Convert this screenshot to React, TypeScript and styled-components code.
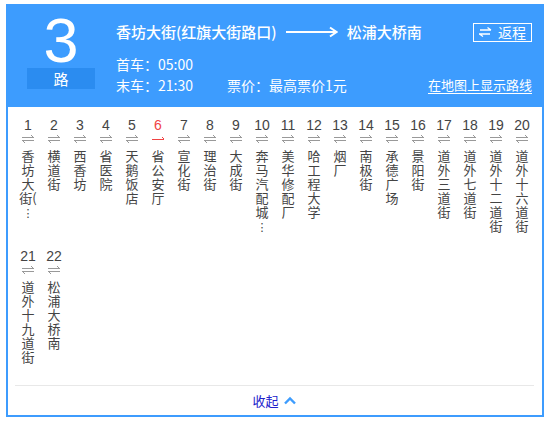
import React from "react";
import styled, { createGlobalStyle } from "styled-components";

const BLUE = "#3d9cfe";

const stops = [
  { name: "香坊大街(", more: true },
  { name: "横道街" },
  { name: "西香坊" },
  { name: "省医院" },
  { name: "天鹅饭店" },
  { name: "省公安厅", current: true },
  { name: "宣化街" },
  { name: "理治街" },
  { name: "大成街" },
  { name: "奔马汽配城", more: true },
  { name: "美华修配厂" },
  { name: "哈工程大学" },
  { name: "烟厂" },
  { name: "南极街" },
  { name: "承德广场" },
  { name: "景阳街" },
  { name: "道外三道街" },
  { name: "道外七道街" },
  { name: "道外十二道街" },
  { name: "道外十六道街" },
  { name: "道外十九道街" },
  { name: "松浦大桥南" },
];

function StopArrow({ current }: { current?: boolean }) {
  if (current) {
    return (
      <svg width="12" height="8" viewBox="0 0 12 8" shapeRendering="crispEdges">
        <path d="M0 4.5H12M11 3.5h1M10 2.5h1" stroke="#f04444" strokeWidth="1" fill="none" />
      </svg>
    );
  }
  return (
    <svg width="12" height="8" viewBox="0 0 12 8" shapeRendering="crispEdges">
      <path d="M0 2.5H12M10 1.5h1M9 0.5h1M0 5.5H12M1 6.5h1M2 7.5h1" stroke="#999" strokeWidth="1" fill="none" />
    </svg>
  );
}

export default function App() {
  return (
    <>
      <GlobalStyle />
      <Frame>
        <Header>
          <LineBadge>
            <LineNumber>3</LineNumber>
            <LineLabel>路</LineLabel>
          </LineBadge>
          <Info>
            <TitleRow>
              <Terminal>香坊大街(红旗大街路口)</Terminal>
              <svg width="52" height="12" viewBox="0 0 52 12">
                <path d="M0 6H50" stroke="#fff" strokeWidth="2" />
                <path d="M44 1.5L50.5 6L44 10.5" stroke="#fff" strokeWidth="2" fill="none" />
              </svg>
              <Terminal>松浦大桥南</Terminal>
              <ReturnButton>
                <svg width="13" height="10" viewBox="0 0 13 10">
                  <path d="M1 3H12M12 3L8.5 0.5M0 7H11M0.5 7L4 9.5" stroke="#fff" strokeWidth="1.3" fill="none" />
                </svg>
                返程
              </ReturnButton>
            </TitleRow>
            <MetaRow $top={14}>首车：05:00</MetaRow>
            <MetaRow $top={5}>
              <span>末车：21:30</span>
              <Fare>票价：最高票价1元</Fare>
              <MapLink>在地图上显示路线</MapLink>
            </MetaRow>
          </Info>
        </Header>
        <StopGrid>
          {stops.map((s, i) => (
            <Stop key={i}>
              <StopNo $current={s.current}>{i + 1}</StopNo>
              <StopArrow current={s.current} />
              <StopName>{s.name}</StopName>
              {s.more && <More>︙</More>}
            </Stop>
          ))}
        </StopGrid>
        <Footer>
          <Collapse>
            收起
            <svg width="14" height="9" viewBox="0 0 14 9">
              <path d="M2 7.5L7 2.5L12 7.5" stroke={BLUE} strokeWidth="2.4" fill="none" />
            </svg>
          </Collapse>
        </Footer>
      </Frame>
    </>
  );
}

const GlobalStyle = createGlobalStyle`
  body {
    margin: 0;
    background: #fff;
    font-family: "Liberation Sans", "Noto Sans CJK SC", sans-serif;
  }
  #root {
    padding: 4px 5px 0 6px;
  }
`;

const Frame = styled.div`
  width: 538px;
  box-sizing: border-box;
  border: 2px solid ${BLUE};
  background: #fff;
`;

const Header = styled.div`
  display: flex;
  height: 101px;
  box-sizing: border-box;
  padding: 8px 10px 0 19px;
  background: ${BLUE};
  color: #fff;
  font-family: "Noto Sans CJK SC", sans-serif;
`;

const LineBadge = styled.div`
  display: flex;
  flex-direction: column;
  align-items: center;
  width: 68px;
`;

const LineNumber = styled.div`
  font-family: "Liberation Sans", sans-serif;
  font-size: 63px;
  line-height: 53px;
  height: 53px;
`;

const LineLabel = styled.div`
  margin-top: 1px;
  width: 68px;
  height: 21px;
  line-height: 21px;
  text-align: center;
  font-size: 15px;
  background: #2b8cf0;
`;

const Info = styled.div`
  flex: 1;
  margin-left: 21px;
  padding-top: 8px;
`;

const TitleRow = styled.div`
  display: flex;
  align-items: center;
  height: 20px;
  gap: 9px;
`;

const Terminal = styled.span`
  font-size: 15px;
  font-weight: 500;
  line-height: 20px;
`;

const ReturnButton = styled.div`
  margin-left: auto;
  display: flex;
  align-items: center;
  gap: 6px;
  height: 19px;
  box-sizing: border-box;
  padding: 0 5px;
  border: 1px solid #fff;
  font-size: 14px;
  line-height: 17px;
`;

const MetaRow = styled.div<{ $top: number }>`
  display: flex;
  align-items: center;
  margin-top: ${(p) => p.$top}px;
  height: 16px;
  font-size: 14px;
  line-height: 16px;
`;

const Fare = styled.span`
  margin-left: 34px;
`;

const MapLink = styled.span`
  margin-left: auto;
  font-size: 13px;
  text-decoration: underline;
  text-underline-offset: 3px;
`;

const StopGrid = styled.div`
  display: grid;
  grid-template-columns: repeat(20, 26px);
  row-gap: 15px;
  padding: 10px 7px 21px;
`;

const Stop = styled.div`
  display: flex;
  flex-direction: column;
  align-items: center;
  & > svg {
    margin-top: 2px;
  }
`;

const StopNo = styled.div<{ $current?: boolean }>`
  height: 16px;
  font-size: 14px;
  line-height: 16px;
  color: ${(p) => (p.$current ? "#f04444" : "#444")};
`;

const StopName = styled.div`
  margin-top: 6px;
  width: 18px;
  text-align: center;
  word-break: break-all;
  font-family: "Noto Sans CJK SC", sans-serif;
  font-size: 13px;
  line-height: 14px;
  color: #444;
`;

const More = styled.div`
  margin-top: 3px;
  height: 11px;
  font-family: "Noto Sans CJK SC", sans-serif;
  font-size: 11px;
  line-height: 11px;
  color: #444;
`;

const Footer = styled.div`
  margin: 0 8px 0 7px;
  border-top: 1px solid #e8e8e8;
  height: 29px;
  display: flex;
  justify-content: center;
  align-items: center;
`;

const Collapse = styled.span`
  display: flex;
  align-items: center;
  gap: 4px;
  font-family: "Noto Sans CJK SC", sans-serif;
  font-size: 13px;
  color: #2222cc;
`;
